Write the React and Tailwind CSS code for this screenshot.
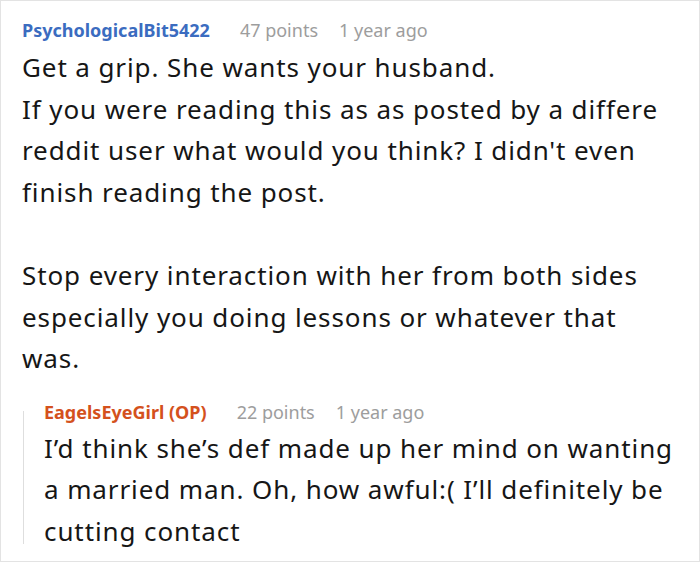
const FONT = { fontFamily: '"Noto Sans", "Open Sans", sans-serif' }

function Meta({ name, color, points }) {
  return (
    <div className="flex items-center h-[26px] text-[18px] leading-[26px]">
      <span className={`font-bold ${color}`}>{name}</span>
      <span className="ml-[30px] text-[#9d9d9d]">{points} points</span>
      <span className="ml-[21px] text-[#9d9d9d]">1 year ago</span>
    </div>
  )
}

export default function App() {
  return (
    <div style={FONT} className="w-[700px] h-[562px] bg-white border border-[#e3e3e3] overflow-hidden">
      <div className="pl-[21px] pt-[16px]">
        <Meta name="PsychologicalBit5422" color="text-[#3b6cc0]" points="47" />
        <div className="text-[26px] leading-[41.6px] tracking-[0.9px] text-[#161616] mt-[4px]">
          <p>Get a grip. She wants your husband.</p>
          <p>If you were reading this as as posted by a differe</p>
          <p>reddit user what would you think? I didn't even</p>
          <p>finish reading the post.</p>
          <p className="h-[41.6px]"></p>
          <p>Stop every interaction with her from both sides</p>
          <p>especially you doing lessons or whatever that</p>
          <p>was.</p>
        </div>

        {/* reply */}
        <div className="flex mt-[19px]">
          <div className="w-px bg-[#dedede] ml-px mt-[12px] mb-[9px]"></div>
          <div className="pl-[20px]">
            <Meta name="EagelsEyeGirl (OP)" color="text-[#d4511d]" points="22" />
            <div className="text-[26px] leading-[41.6px] tracking-[0.9px] text-[#161616] mt-[3px]">
              <p>I’d think she’s def made up her mind on wanting</p>
              <p>a married man. Oh, how awful:( I’ll definitely be</p>
              <p>cutting contact</p>
            </div>
          </div>
        </div>
      </div>
    </div>
  )
}
